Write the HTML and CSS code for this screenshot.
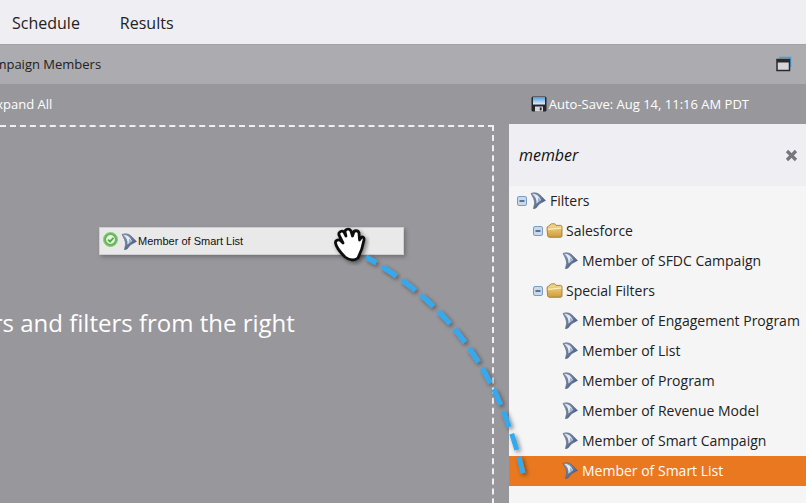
FILE: index.html
```html
<!DOCTYPE html>
<html lang="en">
<head>
    <meta charset="UTF-8">
    <meta name="viewport" content="width=device-width, initial-scale=1.0">
    <title>Smart List</title>
    <link rel="stylesheet" href="styles.css">
</head>
<body>
    <svg class="defs" width="0" height="0">
        <defs>
            <linearGradient id="funnelFill" x1="0" y1="0" x2="1" y2="1">
                <stop offset="0" stop-color="#8fa0ba"/>
                <stop offset="0.6" stop-color="#5d7196"/>
                <stop offset="1" stop-color="#2b3750"/>
            </linearGradient>
            <linearGradient id="folderFill" x1="0" y1="0" x2="0" y2="1">
                <stop offset="0" stop-color="#f6dc8c"/>
                <stop offset="1" stop-color="#cf9a3a"/>
            </linearGradient>
            <linearGradient id="diskFill" x1="0" y1="0" x2="0" y2="1">
                <stop offset="0" stop-color="#4a9be0"/>
                <stop offset="1" stop-color="#e4f0fa"/>
            </linearGradient>
            <symbol id="funnel" viewBox="0 0 16 17">
                <path d="M1 1.500C4 .2 7.500 .6 10 3L15.500 8.400 9.500 11.800 6 16 3.400 16.800 4.600 11.400C4.800 8.600 3 5 1 1.500Z" fill="url(#funnelFill)" stroke="#56627c" stroke-width=".6"/>
                <path d="M2.400 1.800C6 1.800 9 4 11 8L6.400 11.600C7 8 5.400 4.600 2.400 1.800Z" fill="#e6ebf3"/>
                <path d="M8 5.600C9.400 6.400 10 7.400 10.400 8.400L7.400 10.800C8 9 8.200 7.400 8 5.600Z" fill="#9fb0c9"/>
            </symbol>
            <symbol id="folder" viewBox="0 0 17 15">
                <path d="M1 5C1 4 1.600 3.400 2.400 3.200L5.400 .8H8.800L10 2.400H14.600C15.400 2.400 16 3 16 3.800V12.800C16 13.800 15.300 14.300 14.400 14.300H3.600C2.400 14.300 1.800 13.600 1.600 12.600Z" fill="url(#folderFill)" stroke="#8f7136" stroke-width=".8"/>
                <path d="M2 6.400L15.400 5" stroke="#fff0bd" stroke-width="1.200"/>
            </symbol>
            <symbol id="minus" viewBox="0 0 10 10">
                <rect x=".5" y=".5" width="9" height="9" rx="1.500" fill="#c9d9ec" stroke="#7d9cc0"/>
                <path d="M2.500 5H7.500" stroke="#2c4a74" stroke-width="1.400"/>
            </symbol>
        </defs>
    </svg>

    <nav class="tabs">
        <span class="tab">Schedule</span>
        <span class="tab">Results</span>
    </nav>

    <div class="subbar">
        <span class="subbar-title">Campaign Members</span>
        <svg class="window-icon" width="16" height="16" viewBox="0 0 16 16">
            <path d="M3 1.500H14.500V11" fill="none" stroke="#3ba4e6" stroke-width="1.600"/>
            <rect x="1" y="3.500" width="12.500" height="11" fill="#d6d6da" stroke="#2a2a2e" stroke-width="1.500"/>
            <rect x="1" y="3.500" width="12.500" height="3" fill="#2a2a2e"/>
        </svg>
    </div>

    <div class="toolbar">
        <span class="expand">Expand All</span>
        <span class="autosave">
            <svg width="16" height="16" viewBox="0 0 16 16">
                <rect x=".5" y=".5" width="15" height="15" rx="1.500" fill="#26262a"/>
                <rect x="2" y="1" width="12" height="7.500" fill="url(#diskFill)"/>
                <rect x="4" y="10.500" width="8" height="5" fill="#d8d8dc"/>
                <rect x="8.800" y="11.400" width="1.800" height="3" fill="#26262a"/>
            </svg>
            Auto-Save: Aug 14, 11:16 AM PDT
        </span>
    </div>

    <div class="main">
        <section class="canvas">
            <div class="dropzone">
                <p class="hint">Drag triggers and filters from the right</p>
            </div>
            <div class="card">
                <svg class="check" width="15" height="15" viewBox="0 0 15 15">
                    <circle cx="7.500" cy="7.500" r="7" fill="#67b956" stroke="#8fc985"/>
                    <circle cx="7.500" cy="7.500" r="4.400" fill="#e8f3e4"/>
                    <path d="M5 7.600L7 9.600 10.400 5.800" fill="none" stroke="#5aa84a" stroke-width="1.800"/>
                </svg>
                <svg class="funnel" width="16" height="17"><use href="#funnel"/></svg>
                <span>Member of Smart List</span>
            </div>
        </section>

        <aside class="panel">
            <div class="search">
                <span class="term">member</span>
                <svg width="13" height="13" viewBox="0 0 13 13">
                    <path d="M2 2L11 11M11 2L2 11" stroke="#77767c" stroke-width="3.200"/>
                </svg>
            </div>
            <ul class="tree">
                <li class="node level-0">
                    <svg class="minus" width="10" height="10"><use href="#minus"/></svg>
                    <svg class="funnel" width="16" height="17"><use href="#funnel"/></svg>
                    Filters
                </li>
                <li class="node level-1">
                    <svg class="minus" width="10" height="10"><use href="#minus"/></svg>
                    <svg class="folder" width="17" height="15"><use href="#folder"/></svg>
                    Salesforce
                </li>
                <li class="node level-2"><svg class="funnel" width="16" height="17"><use href="#funnel"/></svg>Member of SFDC Campaign</li>
                <li class="node level-1">
                    <svg class="minus" width="10" height="10"><use href="#minus"/></svg>
                    <svg class="folder" width="17" height="15"><use href="#folder"/></svg>
                    Special Filters
                </li>
                <li class="node level-2"><svg class="funnel" width="16" height="17"><use href="#funnel"/></svg>Member of Engagement Program</li>
                <li class="node level-2"><svg class="funnel" width="16" height="17"><use href="#funnel"/></svg>Member of List</li>
                <li class="node level-2"><svg class="funnel" width="16" height="17"><use href="#funnel"/></svg>Member of Program</li>
                <li class="node level-2"><svg class="funnel" width="16" height="17"><use href="#funnel"/></svg>Member of Revenue Model</li>
                <li class="node level-2"><svg class="funnel" width="16" height="17"><use href="#funnel"/></svg>Member of Smart Campaign</li>
                <li class="node level-2 selected"><svg class="funnel" width="16" height="17"><use href="#funnel"/></svg>Member of Smart List</li>
            </ul>
        </aside>

        <!-- drag path from the selected row to the card, with the hand on top -->
        <svg class="drag" width="806" height="379" viewBox="0 124 806 379">
            <defs>
                <filter id="soft" x="-20%" y="-20%" width="140%" height="140%">
                    <feDropShadow dx="2" dy="2" stdDeviation="2" flood-color="#000" flood-opacity=".45"/>
                </filter>
            </defs>
            <path d="M523 473C505 400 470 315 366 257" fill="none" stroke="#35a9ee" stroke-width="5" stroke-dasharray="17 7" filter="url(#soft)"/>
            <g filter="url(#soft)">
                <path d="M345 257C341 253 336 247 335.500 243C335 240 339 239 341 241L343 243 339 235C338 232 342 230 344 232L346 236 345 232C345 229 349 228 351 231L352.500 236 353.500 233C354 230 358 230 359 233L359.500 240 361 238C362 236 364.500 237 364 240C363 246 361 252 358 258C354 261 349 260 345 257Z" fill="#fff" stroke="#111" stroke-width="2.800" stroke-linejoin="round"/>
            </g>
        </svg>
    </div>
</body>
</html>
```

FILE: styles.css
```css
* {
    box-sizing: border-box;
}
html, body {
    margin: 0;
    padding: 0;
    height: 100%;
    overflow: hidden;
}
body {
    font-family: "Open Sans", sans-serif;
    background-color: #98979c;
    color: #222;
}
.defs {
    position: absolute;
}
.tabs {
    display: flex;
    align-items: center;
    gap: 40px;
    height: 44px;
    padding: 2px 0 0 12px;
    background-color: #eeeef3;
    font-size: 16px;
}
.subbar {
    display: flex;
    align-items: center;
    justify-content: space-between;
    height: 40px;
    padding: 0 14px 2px 0;
    background-color: #acabb0;
    border-top: 1px solid #a2a1a6;
    font-size: 13px;
}
.subbar-title {
    margin-left: -21px;
}
.toolbar {
    display: flex;
    align-items: center;
    justify-content: space-between;
    height: 40px;
    padding-right: 57px;
    color: #fff;
    font-size: 13px;
}
.expand {
    margin-left: -11px;
}
.autosave {
    display: flex;
    align-items: center;
    gap: 2px;
}
.main {
    position: relative;
    display: flex;
    height: 379px;
}
.canvas {
    position: relative;
    flex: 0 0 509px;
    overflow: hidden;
}
.dropzone {
    width: 494px;
    height: 420px;
    margin-top: 1px;
    border-top: 2px dashed #f0f0f2;
    border-right: 2px dashed #f0f0f2;
}
.hint {
    margin: 179px 0 0 -131px;
    color: #fff;
    font-size: 24px;
    white-space: nowrap;
}
.card {
    position: absolute;
    left: 99px;
    top: 103px;
    display: flex;
    align-items: center;
    width: 305px;
    height: 28px;
    padding: 0 0 0 3px;
    background-color: #e9e9e9;
    border: 1px solid #cfcfd2;
    box-shadow: 2px 2px 4px rgba(0, 0, 0, 0.25);
    font-family: "Liberation Sans", Arial, sans-serif;
    font-size: 11px;
    color: #111;
}
.check {
    margin-top: -4px;
    margin-right: 3px;
}
.card .funnel {
    margin-right: 1px;
}
.panel {
    flex: 1;
    min-width: 0;
    background-color: #f5f5f6;
}
.search {
    display: flex;
    align-items: center;
    justify-content: space-between;
    height: 62px;
    padding: 0 8px 0 10px;
    background-color: #eeeef3;
}
.term {
    font-size: 16px;
    font-style: italic;
    color: #111;
}
.tree {
    list-style: none;
    margin: 0;
    padding: 0;
}
.node {
    display: flex;
    align-items: center;
    height: 30px;
    padding-bottom: 1px;
    font-size: 14px;
    color: #222;
    white-space: nowrap;
}
.node .funnel {
    margin-right: 4px;
}
.node .minus {
    margin-right: 3px;
}
.node .folder {
    margin-right: 3px;
}
.level-0 {
    padding-left: 8px;
}
.level-1 {
    padding-left: 24px;
}
.level-2 {
    padding-left: 53px;
}
.selected {
    background-color: #e97820;
    color: #fff;
}
.drag {
    position: absolute;
    left: 0;
    top: 0;
    pointer-events: none;
}
```
